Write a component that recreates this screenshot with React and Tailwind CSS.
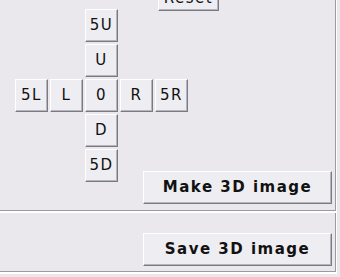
const FONT = "font-['DejaVu_Sans',Verdana,sans-serif]"

function Btn({ children, className = '' }) {
  return (
    <button
      className={`flex items-center justify-center border border-t-white border-l-white border-r-[#7a7a82] border-b-[#7a7a82] bg-[#eeedf1] text-[15px] leading-none tracking-[1.5px] text-[#111] shadow-[inset_-1px_-1px_0_#b6b5bd] ${className}`}
    >
      {children}
    </button>
  )
}

const GRID = [
  [null, null, '5U', null, null],
  [null, null, 'U', null, null],
  ['5L', 'L', '0', 'R', '5R'],
  [null, null, 'D', null, null],
  [null, null, '5D', null, null],
]

export default function App() {
  return (
    <div className={`h-[277px] w-[340px] overflow-hidden bg-[#eae8ed] ${FONT}`}>
      {/* top panel */}
      <div className="h-[213px] w-[337px] border-r border-b-2 border-white">
        <div className="flex h-[211px] flex-col border-r border-b border-[#9a9aa2]">
          <Btn className="-mt-[14px] ml-[158px] h-[25px] w-[61px]">Reset</Btn>
          <div className="-mt-[2px] ml-[15px] grid w-fit grid-cols-[repeat(5,33px)] grid-rows-[repeat(5,33px)] gap-[2px]">
            {GRID.flat().map((label, i) =>
              label ? (
                <Btn key={i} className="h-[33px] w-[33px]">
                  {label}
                </Btn>
              ) : (
                <div key={i} />
              ),
            )}
          </div>
          <Btn className="-mt-[11px] ml-[143px] h-[33px] w-[189px] font-bold">Make 3D image</Btn>
        </div>
      </div>

      {/* bottom panel */}
      <div className="h-[61px] w-[337px] border-r border-b-2 border-white">
        <div className="h-[59px] border-r border-b border-[#9a9aa2] pt-[20px]">
          <Btn className="ml-[143px] h-[33px] w-[189px] font-bold">Save 3D image</Btn>
        </div>
      </div>
    </div>
  )
}
